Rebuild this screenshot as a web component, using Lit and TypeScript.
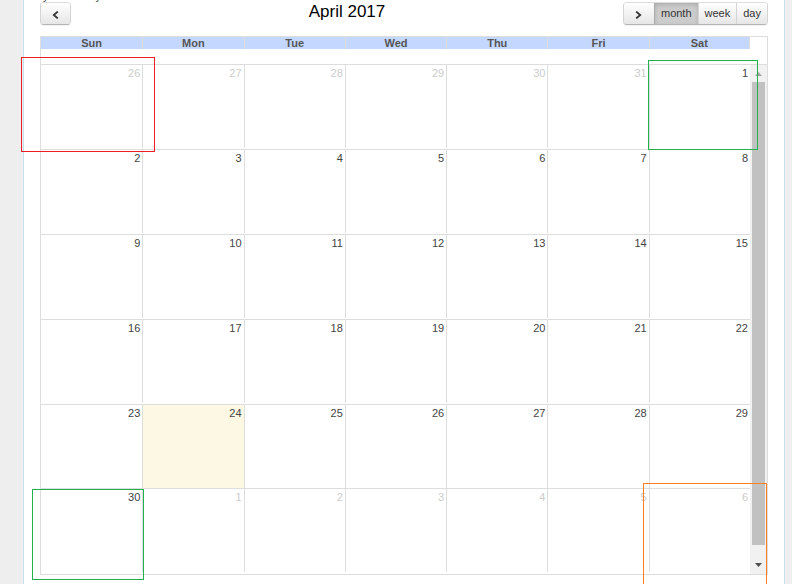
import { LitElement, html, css, nothing } from "lit";
import { customElement, state } from "lit/decorators.js";

interface Day {
  n: number;
  other?: boolean;
  today?: boolean;
  mark?: string;
}

const NAMES = ["Sun", "Mon", "Tue", "Wed", "Thu", "Fri", "Sat"];
const VIEWS = ["month", "week", "day"];

// 42 cells, starting on Sunday 26 March 2017
const MARKS: Record<number, string> = { 0: "before", 6: "first", 35: "last", 41: "after" };
const DAYS: Day[] = Array.from({ length: 42 }, (_, i) => {
  const offset = i - 6;
  const n = offset < 0 ? 32 + offset : offset >= 30 ? offset - 29 : offset + 1;
  return { n, other: offset < 0 || offset >= 30, today: offset === 23, mark: MARKS[i] };
});
const WEEKS = [0, 1, 2, 3, 4, 5].map((w) => DAYS.slice(w * 7, w * 7 + 7));

@customElement("app-root")
export class AppRoot extends LitElement {
  @state() private view = "month";

  static styles = css`
    :host {
      display: block;
      height: 100vh;
      overflow: hidden;
      background: #eeeeee;
      color: #444444;
      font: 11px/12px "Liberation Sans", Arial, sans-serif;
    }
    * {
      box-sizing: border-box;
    }
    .panel {
      min-height: 100vh;
      margin: 0 7px 0 23px;
      padding: 0 16px;
      background: #ffffff;
      border: solid #c5e0ed;
      border-width: 0 1px;
    }
    .cutoff {
      display: flex;
      align-items: flex-end;
      gap: 47px;
      height: 2px;
      margin: 0;
      padding-left: 3px;
      overflow: hidden;
    }
    .toolbar {
      display: flex;
      justify-content: space-between;
      align-items: flex-start;
      height: 34px;
    }
    h2 {
      margin: 0;
      font-size: 17px;
      line-height: 20px;
      font-weight: normal;
      color: #000000;
    }
    .group {
      display: flex;
      border: 1px solid;
      border-color: #dddddd #d4d4d4 #b3b3b3;
      border-radius: 4px;
      overflow: hidden;
      box-shadow: 0 1px 1px rgba(0, 0, 0, 0.06);
    }
    button {
      height: 21px;
      padding: 0 6px;
      border: 0;
      border-left: 1px solid #d4d4d4;
      background: linear-gradient(#ffffff, #e6e6e6);
      color: #333333;
      font: inherit;
      line-height: 21px;
    }
    button:first-child {
      border-left: 0;
    }
    .arrow {
      display: flex;
      align-items: center;
      justify-content: center;
      width: 29px;
      padding: 3px 0 0;
    }
    .next {
      width: 30px;
    }
    .active {
      background: #cccccc;
      border-color: #aaaaaa;
      box-shadow: inset 0 2px 4px rgba(0, 0, 0, 0.15);
    }
    .calendar {
      display: flex;
      border: 1px solid #dddddd;
    }
    .grid {
      flex: 1;
    }
    table {
      width: 100%;
      table-layout: fixed;
      border-collapse: separate;
      border-spacing: 0;
    }
    th {
      padding: 0 0 15px;
    }
    .name {
      display: block;
      height: 12px;
      background: #c4d8ff;
      border-left: 1px solid #dddddd;
      color: #555555;
    }
    th:first-child .name {
      border-left: 0;
    }
    th:last-child .name {
      border-right: 1px solid #dddddd;
    }
    td {
      position: relative;
      padding: 0 0 1px;
      border-top: 1px solid #dddddd;
      vertical-align: top;
    }
    tr:nth-last-child(2) td {
      padding-bottom: 0;
    }
    tr:last-child td {
      padding-bottom: 2px;
    }
    .cell {
      height: 83px;
      padding: 2px 2px 0;
      border-left: 1px solid #dddddd;
      text-align: right;
    }
    td:first-child .cell {
      border-left: 0;
    }
    .other {
      color: #cccccc;
    }
    .today {
      background: #fcf8e3;
    }
    .mark {
      position: absolute;
      z-index: 1;
      pointer-events: none;
    }
    .before {
      inset: -8px -13px -3px -20px;
      border: 1px solid #ed1c24;
    }
    .first {
      inset: -5px -8px -1px -1px;
      border: 1px solid #22b14c;
    }
    .last {
      inset: 0 -2px -6px -9px;
      border: 1px solid #22b14c;
    }
    .after {
      inset: -6px -17px -24px -6px;
      border: 1px solid #ff7f27;
    }
    .scroll {
      display: flex;
      flex-direction: column;
      width: 17px;
      margin-top: 27px;
      padding: 0 2px;
      border-top: 1px solid #dddddd;
      background: #f1f1f1;
    }
    .scroll svg {
      flex: none;
      width: 13px;
      height: 17px;
    }
    .thumb {
      flex: 1;
      margin-bottom: 12px;
      background: #c1c1c1;
    }
  `;

  render() {
    return html`
      <main class="panel">
        <p class="cutoff"><span>y</span><span>y</span></p>
        <div class="toolbar">
          <div class="group">
            <button class="arrow" aria-label="Previous">
              <svg width="7" height="8" viewBox="0 0 7 8" fill="none" stroke="#333" stroke-width="1.8">
                <path d="M5.8 0.6 1.8 4 5.8 7.4" />
              </svg>
            </button>
          </div>
          <h2>April 2017</h2>
          <div class="group">
            <button class="arrow next" aria-label="Next">
              <svg width="7" height="8" viewBox="0 0 7 8" fill="none" stroke="#333" stroke-width="1.8">
                <path d="M1.2 0.6 5.2 4 1.2 7.4" />
              </svg>
            </button>
            ${VIEWS.map(
              (v) => html`<button class=${v === this.view ? "active" : ""} @click=${() => (this.view = v)}>${v}</button>`
            )}
          </div>
        </div>
        <div class="calendar">
          <div class="grid">
            <table>
              <thead>
                <tr>
                  ${NAMES.map((n) => html`<th scope="col"><span class="name">${n}</span></th>`)}
                </tr>
              </thead>
              <tbody>
                ${WEEKS.map(
                  (week) => html`<tr>
                    ${week.map(
                      (d) => html`<td class=${d.today ? "today" : d.other ? "other" : ""}>
                        <div class="cell">${d.n}</div>
                        ${d.mark ? html`<div class="mark ${d.mark}"></div>` : nothing}
                      </td>`
                    )}
                  </tr>`
                )}
              </tbody>
            </table>
          </div>
          <div class="scroll" aria-hidden="true">
            <svg viewBox="0 0 13 17"><path d="M3 11 6.5 7 10 11Z" fill="#a3a3a3" /></svg>
            <div class="thumb"></div>
            <svg viewBox="0 0 13 17"><path d="M3 6 10 6 6.5 10Z" fill="#505050" /></svg>
          </div>
        </div>
      </main>
    `;
  }
}
